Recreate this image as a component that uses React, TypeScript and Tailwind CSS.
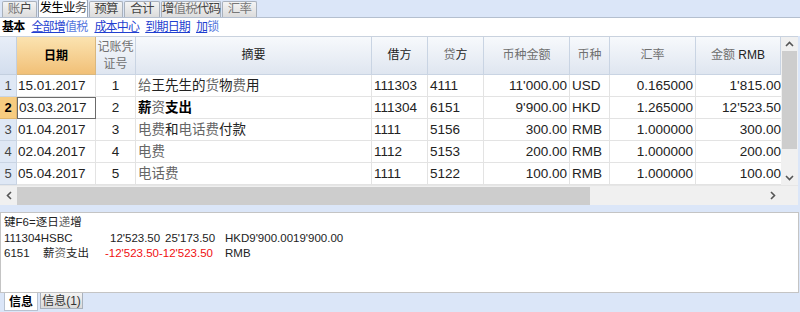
import React from "react";

const LIGHT = new Set(Array.from("给货费资电话记账凭证号贷币种金额汇率值税锁递务"));

function T({ s, light = "text-[#6a6a6a]" }: { s: string; light?: string }) {
  return (
    <>
      {Array.from(s).map((c, i) =>
        LIGHT.has(c) ? (
          <span key={i} className={`${light} font-normal`}>
            {c}
          </span>
        ) : (
          <span key={i}>{c}</span>
        )
      )}
    </>
  );
}

const font = { fontFamily: '"Liberation Sans", "Noto Sans CJK SC", sans-serif' };

const rows = [
  ["1", "15.01.2017", "1", "给王先生的货物费用", "111303", "4111", "11'000.00", "USD", "0.165000", "1'815.00"],
  ["2", "03.03.2017", "2", "薪资支出", "111304", "6151", "9'900.00", "HKD", "1.265000", "12'523.50"],
  ["3", "01.04.2017", "3", "电费和电话费付款", "1111", "5156", "300.00", "RMB", "1.000000", "300.00"],
  ["4", "02.04.2017", "4", "电费", "1112", "5153", "200.00", "RMB", "1.000000", "200.00"],
  ["5", "05.04.2017", "5", "电话费", "1111", "5122", "100.00", "RMB", "1.000000", "100.00"],
];

const cols = "grid-cols-[17px_79px_40px_236px_56px_56px_86px_40px_86px_85px]";

function Tab({ label, w, active }: { label: string; w: string; active?: boolean }) {
  return (
    <div
      className={`${w} flex items-center justify-center border border-b-0 rounded-t-[2px] text-[12.5px] tracking-[-0.8px] leading-none ${
        active
          ? "bg-white border-[#9aa5b5] text-black h-[18px]"
          : "bg-gradient-to-b from-[#f4f4f4] to-[#dcdcdc] border-[#a9b1bc] text-[#444] h-[16px]"
      }`}
    >
      <T s={label} light={active ? "text-[#555]" : "text-[#777]"} />
    </div>
  );
}

export default function App() {
  return (
    <div className="w-[800px] h-[312px] bg-[#dbe6f8] flex flex-col overflow-hidden text-[#222]" style={font}>
      {/* top tabs */}
      <div className="h-[18px] flex items-end gap-[1px] pl-[2px] border-b border-[#b4bfcf]">
        <Tab label="账户" w="w-[35px]" />
        <Tab label="发生业务" w="w-[50px]" active />
        <Tab label="预算" w="w-[34px]" />
        <Tab label="合计" w="w-[36px]" />
        <Tab label="增值税代码" w="w-[60px]" />
        <Tab label="汇率" w="w-[35px]" />
      </div>
      {/* toolbar */}
      <div className="h-[18px] bg-white flex items-center gap-[6px] pl-[2px] text-[12px] tracking-[-0.8px] leading-none">
        <span className="font-bold text-black mr-[1px]">基本</span>
        <span className="text-[#1f3fd0]">
          <span className="underline">全部增</span>
          <span className="text-[#5577dd]">值税</span>
        </span>
        <span className="text-[#1f3fd0] underline ml-[1px]">成本中心</span>
        <span className="text-[#1f3fd0] underline">到期日期</span>
        <span className="text-[#1f3fd0]">
          <span className="underline">加</span>
          <span className="text-[#5577dd]">锁</span>
        </span>
      </div>
      {/* grid */}
      <div className="h-[169px] flex flex-col bg-white border-t border-[#c9d2de] w-[798px]">
        <div className="flex h-[149px]">
          <div className="w-[781px] flex flex-col overflow-hidden">
            {/* header */}
            <div className={`grid ${cols} h-[38px] text-[12px]`}>
              <div className="bg-gradient-to-b from-[#e8eef8] to-[#d3deee] border-r border-b border-[#c3cfdf]" />
              <div className="bg-gradient-to-b from-[#fbe3b0] to-[#f1c077] border-r border-b border-[#d9b77e] flex items-center justify-center font-bold text-black">
                日期
              </div>
              {[
                "记账凭|证号",
                "摘要",
                "借方",
                "贷方",
                "币种金额",
                "币种",
                "汇率",
                "金额 RMB",
              ].map((h, i) => (
                <div
                  key={i}
                  className="bg-gradient-to-b from-[#f7f9fc] to-[#dfe6f0] border-r border-b border-[#c9d4e3] flex flex-col items-center justify-center leading-[17px] text-[#222]"
                >
                  {h.split("|").map((p, j) => (
                    <div key={j} className="whitespace-nowrap">
                      <T s={p} light="text-[#707070]" />
                    </div>
                  ))}
                </div>
              ))}
            </div>
            {/* rows */}
            {rows.map((r, ri) => {
              const sel = ri === 1;
              return (
                <div key={ri} className={`grid ${cols} h-[22px] text-[13.5px] leading-none`}>
                  <div
                    className={`flex items-center justify-center border-r border-b text-[13px] ${
                      sel
                        ? "bg-[#f7cc80] border-[#e0b56c] font-bold text-black"
                        : "bg-[#dfe8f5] border-[#c9d4e3] text-[#444]"
                    }`}
                  >
                    {r[0]}
                  </div>
                  <div
                    className={`flex items-center pl-[1px] border-r border-b ${
                      sel ? "border border-[#6b6b6b]" : "border-[#e3e3e3]"
                    }`}
                  >
                    {r[1]}
                  </div>
                  <div className="flex items-center justify-center border-r border-b border-[#e3e3e3]">{r[2]}</div>
                  <div
                    className={`flex items-center pl-[2px] border-r border-b border-[#e3e3e3] whitespace-nowrap ${
                      sel ? "font-bold text-black" : ""
                    }`}
                  >
                    <T s={r[3]} light="text-[#666]" />
                  </div>
                  <div className="flex items-center pl-[2px] border-r border-b border-[#e3e3e3]">{r[4]}</div>
                  <div className="flex items-center pl-[2px] border-r border-b border-[#e3e3e3]">{r[5]}</div>
                  <div className="flex items-center justify-end pr-[2px] border-r border-b border-[#e3e3e3]">{r[6]}</div>
                  <div className="flex items-center pl-[2px] border-r border-b border-[#e3e3e3]">{r[7]}</div>
                  <div className="flex items-center justify-end pr-[2px] border-r border-b border-[#e3e3e3]">{r[8]}</div>
                  <div className="flex items-center justify-end overflow-hidden whitespace-nowrap border-b border-[#e3e3e3]">
                    {r[9]}
                  </div>
                </div>
              );
            })}
          </div>
          {/* vertical scrollbar */}
          <div className="w-[17px] bg-[#f0f0f0] flex flex-col items-center">
            <div className="h-[14px] flex items-center justify-center">
              <svg width="9" height="6" viewBox="0 0 9 6">
                <path d="M1 5 L4.5 1.5 L8 5" stroke="#555" strokeWidth="1.6" fill="none" />
              </svg>
            </div>
            <div className="w-[15px] h-[98px] bg-[#cdcdcd]" />
            <div className="flex-1" />
            <div className="h-[14px] flex items-center justify-center">
              <svg width="9" height="6" viewBox="0 0 9 6">
                <path d="M1 1 L4.5 4.5 L8 1" stroke="#555" strokeWidth="1.6" fill="none" />
              </svg>
            </div>
          </div>
        </div>
        {/* horizontal scrollbar */}
        <div className="h-[20px] bg-[#f0f0f0] flex items-center border-t border-[#e6e6e6]">
          <div className="w-[17px] flex items-center justify-center">
            <svg width="6" height="9" viewBox="0 0 6 9">
              <path d="M5 1 L1.5 4.5 L5 8" stroke="#555" strokeWidth="1.6" fill="none" />
            </svg>
          </div>
          <div className="w-[573px] h-[18px] bg-[#cdcdcd]" />
          <div className="flex-1" />
          <div className="w-[17px] mr-[17px] flex items-center justify-center">
            <svg width="6" height="9" viewBox="0 0 6 9">
              <path d="M1 1 L4.5 4.5 L1 8" stroke="#555" strokeWidth="1.6" fill="none" />
            </svg>
          </div>
        </div>
      </div>
      {/* splitter */}
      <div className="h-[7px]" />
      {/* info panel */}
      <div className="h-[81px] w-[799px] bg-white border border-[#c4c4c4] pl-[3px] pt-[2px] text-[11.5px] leading-[15.5px] text-[#222]">
        <div>
          键F6=逐日<T s="递" light="text-[#666]" />增
        </div>
        <div className="flex whitespace-nowrap">
          <span className="w-[106px]">111304HSBC</span>
          <span className="w-[55px]">12'523.50</span>
          <span className="w-[60px]">25'173.50</span>
          <span>HKD9'900.0019'900.00</span>
        </div>
        <div className="flex whitespace-nowrap">
          <span className="w-[39px]">6151</span>
          <span className="w-[62px]">
            薪<T s="资" light="text-[#666]" />支出
          </span>
          <span className="w-[120px] text-[#f01010]">-12'523.50-12'523.50</span>
          <span>RMB</span>
        </div>
      </div>
      {/* bottom tabs */}
      <div className="flex items-start gap-[2px] pl-[4px] text-[12px] leading-none">
        <div className="h-[18px] w-[34px] bg-white flex items-center justify-center font-bold text-black border border-t-0 border-[#b8c2d0]">
          信息
        </div>
        <div className="h-[16px] w-[43px] bg-gradient-to-b from-[#f3f3f3] to-[#dadada] flex items-center justify-center border border-t-0 border-[#a9b1bc] text-[#333]">
          信息(1)
        </div>
      </div>
    </div>
  );
}
